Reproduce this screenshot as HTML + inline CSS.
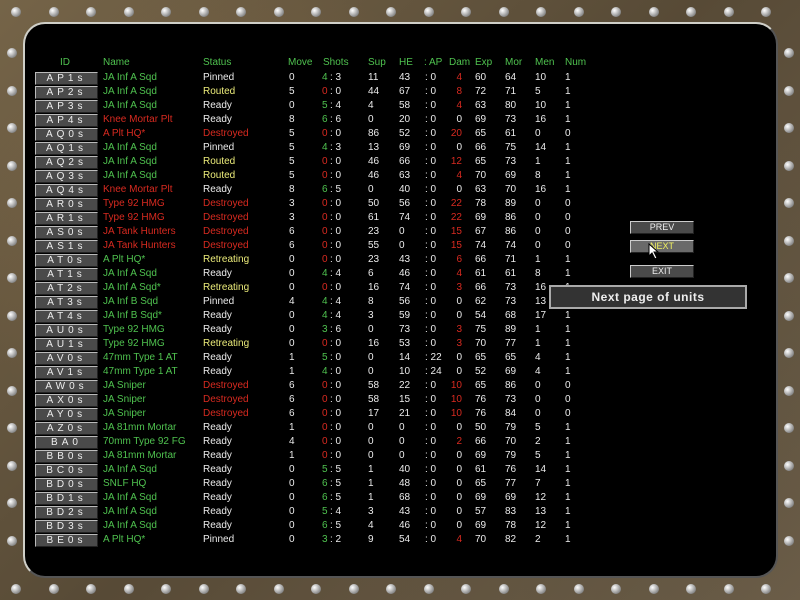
<!DOCTYPE html>
<html><head><meta charset="utf-8"><style>
*{margin:0;padding:0;box-sizing:border-box}
body{width:800px;height:600px;overflow:hidden;position:relative;background:#6e5e45;font-family:"Liberation Sans","DejaVu Sans",sans-serif;font-size:10px}
#frame{position:absolute;inset:0;background:
radial-gradient(circle at 30% 40%,rgba(140,110,70,.5),transparent 40%),
radial-gradient(circle at 80% 70%,rgba(90,80,60,.6),transparent 45%),
linear-gradient(135deg,#756448,#574a36 50%,#6f604b)}
#panel{position:absolute;left:23px;top:22px;width:755px;height:556px;background:#000;border-radius:22px;border:2px solid #cfcfc8;border-right-color:#555;border-bottom-color:#555}
.rv{position:absolute;width:10px;height:10px;border-radius:50%;background:radial-gradient(circle at 35% 35%,#fff,#aaa 50%,#555)}
.t{position:absolute;white-space:nowrap;line-height:12px}
.g{color:#4fc24f}.r{color:#d82a20}.y{color:#ecec7a}.w{color:#ececec}
.idb{position:absolute;left:35px;width:63px;height:13px;background:#4a4a4a;border-top:1px solid #bbb;border-left:1px solid #bbb;border-bottom:1px solid #222;border-right:1px solid #222;color:#eee;text-align:center;letter-spacing:4px;line-height:11px;font-size:10px}
.btn{position:absolute;left:630px;width:64px;height:13px;background:#4a4a4a;border-top:1px solid #ccc;border-left:1px solid #ccc;border-bottom:1px solid #222;border-right:1px solid #222;color:#eee;text-align:center;font-size:9px;line-height:11px}
</style></head><body>
<div id="frame"></div>
<div id="panel"></div>
<div id="c"></div>
<div class="btn" style="top:221px">PREV</div>
<div class="btn" style="top:240px;background:#6a6a6a;color:#f0f060">NEXT</div>
<div class="btn" style="top:265px">EXIT</div>
<svg style="position:absolute;left:648px;top:243px" width="12" height="18"><path d="M1 1 L1 13 L4 10 L7 16 L9 15 L6 9 L10 9 Z" fill="#fff" stroke="#000" stroke-width="1"/></svg>
<div style="position:absolute;left:549px;top:285px;width:198px;height:24px;background:#333;border:2px solid #aaa;color:#eee;font-size:12px;font-weight:bold;text-align:center;line-height:20px;letter-spacing:.5px">Next page of units</div>
<script>
var c=document.getElementById('c'),h='';
function T(x,y,s,cl){h+='<div class="t '+cl+'" style="left:'+x+'px;top:'+y+'px">'+s+'</div>';}
for(var x=11;x<790;x+=37.5){h+='<div class="rv" style="left:'+x+'px;top:7px"></div><div class="rv" style="left:'+x+'px;top:584px"></div>';}
for(var y=48;y<570;y+=37.5){h+='<div class="rv" style="left:7px;top:'+y+'px"></div><div class="rv" style="left:784px;top:'+y+'px"></div>';}
var hy=57;
T(60,hy,'ID','g');T(103,hy,'Name','g');T(203,hy,'Status','g');T(288,hy,'Move','g');T(323,hy,'Shots','g');
T(368,hy,'Sup','g');T(399,hy,'HE','g');T(424,hy,': AP','g');T(449,hy,'Dam','g');T(475,hy,'Exp','g');T(505,hy,'Mor','g');T(535,hy,'Men','g');T(565,hy,'Num','g');
var D=`AP1s|JA Inf A Sqd|g|Pinned|w|0|4g|3|11|43|0|4r|60|64|10|1
AP2s|JA Inf A Sqd|g|Routed|y|5|0r|0|44|67|0|8r|72|71|5|1
AP3s|JA Inf A Sqd|g|Ready|w|0|5g|4|4|58|0|4r|63|80|10|1
AP4s|Knee Mortar Plt|r|Ready|w|8|6g|6|0|20|0|0|69|73|16|1
AQ0s|A Plt HQ*|r|Destroyed|r|5|0r|0|86|52|0|20r|65|61|0|0
AQ1s|JA Inf A Sqd|g|Pinned|w|5|4g|3|13|69|0|0|66|75|14|1
AQ2s|JA Inf A Sqd|g|Routed|y|5|0r|0|46|66|0|12r|65|73|1|1
AQ3s|JA Inf A Sqd|g|Routed|y|5|0r|0|46|63|0|4r|70|69|8|1
AQ4s|Knee Mortar Plt|r|Ready|w|8|6g|5|0|40|0|0|63|70|16|1
AR0s|Type 92 HMG|r|Destroyed|r|3|0r|0|50|56|0|22r|78|89|0|0
AR1s|Type 92 HMG|r|Destroyed|r|3|0r|0|61|74|0|22r|69|86|0|0
AS0s|JA Tank Hunters|r|Destroyed|r|6|0r|0|23|0|0|15r|67|86|0|0
AS1s|JA Tank Hunters|r|Destroyed|r|6|0r|0|55|0|0|15r|74|74|0|0
AT0s|A Plt HQ*|g|Retreating|y|0|0r|0|23|43|0|6r|66|71|1|1
AT1s|JA Inf A Sqd|g|Ready|w|0|4g|4|6|46|0|4r|61|61|8|1
AT2s|JA Inf A Sqd*|g|Retreating|y|0|0r|0|16|74|0|3r|66|73|16|1
AT3s|JA Inf B Sqd|g|Pinned|w|4|4g|4|8|56|0|0|62|73|13|1
AT4s|JA Inf B Sqd*|g|Ready|w|0|4g|4|3|59|0|0|54|68|17|1
AU0s|Type 92 HMG|g|Ready|w|0|3g|6|0|73|0|3r|75|89|1|1
AU1s|Type 92 HMG|g|Retreating|y|0|0r|0|16|53|0|3r|70|77|1|1
AV0s|47mm Type 1 AT|g|Ready|w|1|5g|0|0|14|22|0|65|65|4|1
AV1s|47mm Type 1 AT|g|Ready|w|1|4g|0|0|10|24|0|52|69|4|1
AW0s|JA Sniper|g|Destroyed|r|6|0r|0|58|22|0|10r|65|86|0|0
AX0s|JA Sniper|g|Destroyed|r|6|0r|0|58|15|0|10r|76|73|0|0
AY0s|JA Sniper|g|Destroyed|r|6|0r|0|17|21|0|10r|76|84|0|0
AZ0s|JA 81mm Mortar|g|Ready|w|1|0r|0|0|0|0|0|50|79|5|1
BA0|70mm Type 92 FG|g|Ready|w|4|0r|0|0|0|0|2r|66|70|2|1
BB0s|JA 81mm Mortar|g|Ready|w|1|0r|0|0|0|0|0|69|79|5|1
BC0s|JA Inf A Sqd|g|Ready|w|0|5g|5|1|40|0|0|61|76|14|1
BD0s|SNLF HQ|g|Ready|w|0|6g|5|1|48|0|0|65|77|7|1
BD1s|JA Inf A Sqd|g|Ready|w|0|6g|5|1|68|0|0|69|69|12|1
BD2s|JA Inf A Sqd|g|Ready|w|0|5g|4|3|43|0|0|57|83|13|1
BD3s|JA Inf A Sqd|g|Ready|w|0|6g|5|4|46|0|0|69|78|12|1
BE0s|A Plt HQ*|g|Pinned|w|0|3g|2|9|54|0|4r|70|82|2|1`.split('\n');
D.forEach(function(l,i){var f=l.split('|'),y=71+i*14;
h+='<div class="idb" style="top:'+(y+1)+'px">'+f[0]+'</div>';
T(103,y+1,f[1],f[2]);T(203,y+1,f[3],f[4]);T(289,y+1,f[5],'w');
var s=f[6];T(322,y+1,s[0],s[1]);T(330,y+1,': '+f[7],'w');
T(368,y+1,f[8],'w');T(399,y+1,f[9],'w');T(425,y+1,': '+f[10],'w');
var d=f[11],dc=d.slice(-1)=='r'?'r':'w';d=d.replace('r','');
h+='<div class="t '+dc+'" style="left:440px;width:22px;text-align:right;top:'+(y+1)+'px">'+d+'</div>';
T(475,y+1,f[12],'w');T(505,y+1,f[13],'w');T(535,y+1,f[14],'w');T(565,y+1,f[15],'w');});
c.innerHTML=h;
</script>
</body></html>
